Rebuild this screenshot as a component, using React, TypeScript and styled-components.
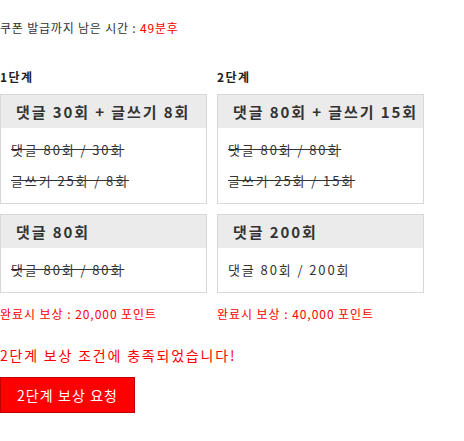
import styled, { createGlobalStyle } from 'styled-components'

const GlobalStyle = createGlobalStyle`
body {
    margin: 0;
    background: #fff;
    font-family: "Noto Sans CJK KR", "Noto Sans", sans-serif;
    color: #333;
}
`

const Page = styled.div`
padding-top: 20px;
`

const Notice = styled.div`
font-size: 12px;
line-height: 16px;
color: #333;
letter-spacing: 0.8px;
`

const Red = styled.span`
color: #ff0000;
`

const Steps = styled.div`
display: grid;
grid-template-columns: 207px 207px;
column-gap: 10px;
margin-top: 33px;
`

const StepColumn = styled.div`
display: flex;
flex-direction: column;
gap: 10px;
`

const StepTitle = styled.div`
font-size: 12px;
font-weight: bold;
line-height: 16px;
color: #222;
letter-spacing: 1.5px;
margin-bottom: -1px;
`

const Card = styled.div`
border: 1px solid #d8d8d8;
background: #fff;
`

const CardHeader = styled.div`
background: #ebebeb;
height: 33px;
line-height: 33px;
padding-left: 15px;
font-size: 15px;
font-weight: bold;
color: #333;
letter-spacing: 1.9px;
`

const CardBody = styled.div`
padding: 6px 10px 7px;
`

const Row = styled.div<{ $done?: boolean }>`
font-size: 13px;
line-height: 31px;
color: #333;
letter-spacing: 1.9px;
text-decoration: ${p => (p.$done ? 'line-through' : 'none')};
`

const Reward = styled.div`
font-size: 12px;
line-height: 16px;
color: #ff0000;
letter-spacing: 0.95px;
margin-top: 3px;
`

const Complete = styled.div`
font-size: 14px;
line-height: 20px;
color: #ff0000;
letter-spacing: 1.8px;
margin-top: 23px;
`

const RequestButton = styled.button`
display: block;
margin-top: 12px;
width: 135px;
height: 36px;
padding: 0;
border: 1px solid #c00000;
background: #ff0000;
color: #fff;
font-family: inherit;
font-size: 14px;
letter-spacing: 1.1px;
cursor: pointer;
`

type Goal = { title: string; rows: { text: string; done: boolean }[] }

const steps: { title: string; goals: Goal[]; reward: string }[] = [
    {
        title: '1단계',
        goals: [
            {
                title: '댓글 30회 + 글쓰기 8회',
                rows: [
                    { text: '댓글 80회 / 30회', done: true },
                    { text: '글쓰기 25회 / 8회', done: true },
                ],
            },
            { title: '댓글 80회', rows: [{ text: '댓글 80회 / 80회', done: true }] },
        ],
        reward: '완료시 보상 : 20,000 포인트',
    },
    {
        title: '2단계',
        goals: [
            {
                title: '댓글 80회 + 글쓰기 15회',
                rows: [
                    { text: '댓글 80회 / 80회', done: true },
                    { text: '글쓰기 25회 / 15회', done: true },
                ],
            },
            { title: '댓글 200회', rows: [{ text: '댓글 80회 / 200회', done: false }] },
        ],
        reward: '완료시 보상 : 40,000 포인트',
    },
]

export default function App() {
    return (
        <>
            <GlobalStyle />
            <Page>
                <Notice>
                    쿠폰 발급까지 남은 시간 : <Red>49분후</Red>
                </Notice>

                <Steps>
                    {steps.map(step => (
                        <StepColumn key={step.title}>
                            <StepTitle>{step.title}</StepTitle>
                            {step.goals.map(goal => (
                                <Card key={goal.title}>
                                    <CardHeader>{goal.title}</CardHeader>
                                    <CardBody>
                                        {goal.rows.map(row => (
                                            <Row key={row.text} $done={row.done}>{row.text}</Row>
                                        ))}
                                    </CardBody>
                                </Card>
                            ))}
                            <Reward>{step.reward}</Reward>
                        </StepColumn>
                    ))}
                </Steps>

                <Complete>2단계 보상 조건에 충족되었습니다!</Complete>
                <RequestButton>2단계 보상 요청</RequestButton>
            </Page>
        </>
    )
}
